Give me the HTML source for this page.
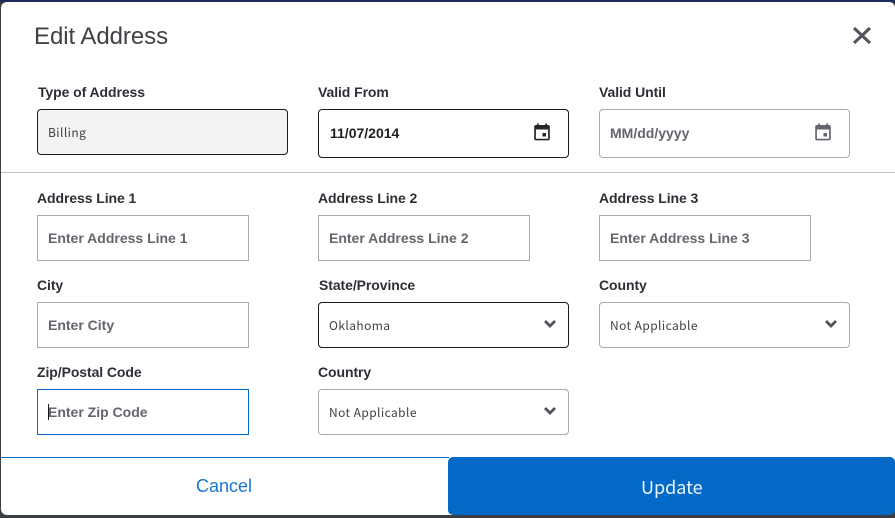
<!DOCTYPE html>
<html><head><meta charset="utf-8">
<style>
html,body{margin:0;padding:0;width:895px;height:518px;overflow:hidden;background:#3c3f44}
body{position:relative;font-family:"Liberation Sans",sans-serif}
div{position:absolute;box-sizing:border-box;white-space:nowrap}
#top{left:0;top:0;width:895px;height:2px;background:#1d2b5c}
#modal{left:1px;top:2px;width:894px;height:513px;background:#fff;border-radius:6px}
.l{font-size:14px;font-weight:bold;color:#2c3036;letter-spacing:-.08px;line-height:16px}
.b{border:1px solid #aaa;background:#fff}
.r{border-radius:4px}
.d{border-color:#1b1b1f}
.p{font-size:14px;font-weight:bold;color:#63666c;line-height:16px}
.v{font-size:12px;color:#3c3f44;font-family:"Noto Sans CJK JP","Liberation Sans",sans-serif;letter-spacing:.42px;line-height:16px}
svg{position:absolute;display:block}
</style></head><body>
<div id="top"></div>
<div id="modal"></div>
<div style="left:34px;top:22px;font-size:24px;line-height:29px;color:#3f4246;letter-spacing:-.06px">Edit Address</div>
<svg style="left:851px;top:25px" width="21" height="21" viewBox="0 0 21 21"><path d="M3 3L19 18M19 3L3 18" stroke="#50555b" stroke-width="3.100" fill="none"/></svg>

<div class="l" style="left:38px;top:84px">Type of Address</div>
<div class="b r d" style="left:37px;top:109px;width:251px;height:46px;background:#f3f3f3"></div>
<div class="v" style="left:48px;top:125px">Billing</div>

<div class="l" style="left:318px;top:84px">Valid From</div>
<div class="b r d" style="left:318px;top:109px;width:251px;height:49px"></div>
<div class="p" style="left:330px;top:125px;color:#1f2024">11/07/2014</div>
<svg style="left:532px;top:122px" width="20" height="20" viewBox="0 0 20 20"><path fill-rule="evenodd" d="M5 1.500h1.800V3h6.400V1.500H15V3h1.200c.9 0 1.600.7 1.600 1.600v12.200c0 .9-.7 1.600-1.600 1.600H3.800c-.9 0-1.600-.7-1.600-1.600V4.600c0-.9.7-1.600 1.600-1.600H5zM3.900 7.500v9.200h12.200V7.500zM10.500 11h3.500v3.500h-3.500z" fill="#25262b"/></svg>

<div class="l" style="left:599px;top:84px">Valid Until</div>
<div class="b r" style="left:599px;top:109px;width:251px;height:49px"></div>
<div class="p" style="left:610px;top:125px">MM/dd/yyyy</div>
<svg style="left:813px;top:122px" width="20" height="20" viewBox="0 0 20 20"><path fill-rule="evenodd" d="M5 1.500h1.800V3h6.400V1.500H15V3h1.200c.9 0 1.600.7 1.600 1.600v12.200c0 .9-.7 1.600-1.600 1.600H3.800c-.9 0-1.600-.7-1.600-1.600V4.600c0-.9.7-1.600 1.600-1.600H5zM3.900 7.500v9.200h12.200V7.500zM10.500 11h3.500v3.500h-3.500z" fill="#63666c"/></svg>

<div style="left:1px;top:172px;width:894px;height:1px;background:#bfc4c9"></div>

<div class="l" style="left:37px;top:190px">Address Line 1</div>
<div class="b" style="left:37px;top:215px;width:212px;height:46px"></div>
<div class="p" style="left:48px;top:230px">Enter Address Line 1</div>
<div class="l" style="left:318px;top:190px">Address Line 2</div>
<div class="b" style="left:318px;top:215px;width:212px;height:46px"></div>
<div class="p" style="left:329px;top:230px">Enter Address Line 2</div>
<div class="l" style="left:599px;top:190px">Address Line 3</div>
<div class="b" style="left:599px;top:215px;width:212px;height:46px"></div>
<div class="p" style="left:610px;top:230px">Enter Address Line 3</div>

<div class="l" style="left:37px;top:277px">City</div>
<div class="b" style="left:37px;top:302px;width:212px;height:46px"></div>
<div class="p" style="left:48px;top:317px">Enter City</div>
<div class="l" style="left:319px;top:277px">State/Province</div>
<div class="b r d" style="left:318px;top:302px;width:251px;height:46px"></div>
<div class="v" style="left:329px;top:318px">Oklahoma</div>
<svg style="left:544px;top:319px" width="12" height="10" viewBox="0 0 12 10"><path d="M1 2L6 7L11 2" stroke="#50545a" stroke-width="2.800" fill="none"/></svg>
<div class="l" style="left:599px;top:277px">County</div>
<div class="b r" style="left:599px;top:302px;width:251px;height:46px"></div>
<div class="v" style="left:610px;top:318px">Not Applicable</div>
<svg style="left:825px;top:319px" width="12" height="10" viewBox="0 0 12 10"><path d="M1 2L6 7L11 2" stroke="#50545a" stroke-width="2.800" fill="none"/></svg>

<div class="l" style="left:37px;top:364px">Zip/Postal Code</div>
<div class="b" style="left:37px;top:389px;width:212px;height:46px;border-color:#0369c7"></div>
<div class="p" style="left:48px;top:404px">Enter Zip Code</div>
<div style="left:48px;top:404px;width:1px;height:16px;background:#1b1b1f"></div>
<div class="l" style="left:318px;top:364px">Country</div>
<div class="b r" style="left:318px;top:389px;width:251px;height:46px"></div>
<div class="v" style="left:329px;top:405px">Not Applicable</div>
<svg style="left:544px;top:406px" width="12" height="10" viewBox="0 0 12 10"><path d="M1 2L6 7L11 2" stroke="#50545a" stroke-width="2.800" fill="none"/></svg>

<div style="left:1px;top:457px;width:448px;height:1px;background:#0369c7"></div>
<div style="left:196px;top:476px;font-size:18px;line-height:21px;color:#1a76cc">Cancel</div>
<div style="left:448px;top:457px;width:447px;height:58px;background:#0369c7;border-radius:5px"></div>
<div style="left:641px;top:476px;font-size:18px;line-height:23px;color:#eef5fc;font-family:'Noto Sans CJK JP','Liberation Sans',sans-serif">Update</div>
</body></html>
